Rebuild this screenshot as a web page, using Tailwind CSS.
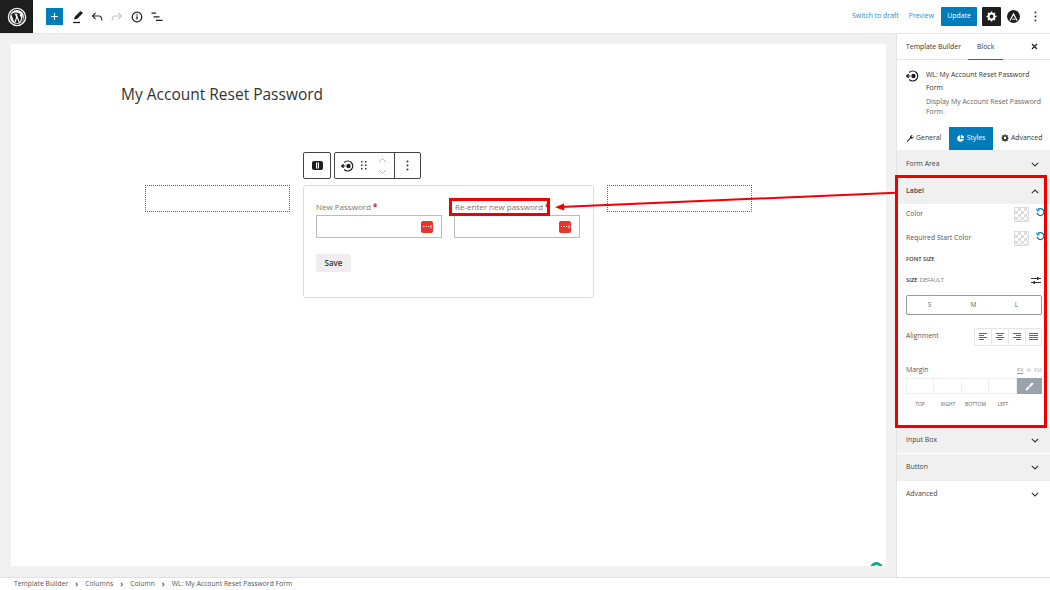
<!DOCTYPE html>
<html lang="en">
<head>
<meta charset="UTF-8">
<title>My Account Reset Password</title>
<script src="https://cdn.jsdelivr.net/npm/@tailwindcss/browser@4"></script>
</head>
<body class="relative w-[1050px] h-[590px] overflow-hidden bg-white font-['Open_Sans',sans-serif] text-[#444]">

<!-- top bar -->
<header class="flex items-center h-[34px] border-b border-[#e6e6e6] bg-white">
  <div class="flex items-center justify-center w-[33px] h-[33px] bg-[#1e1e1e]">
    <svg width="20" height="20" viewBox="0 0 20 20"><circle cx="10" cy="10" r="8.6" fill="none" stroke="#fff" stroke-width="1.3"/><circle cx="10" cy="10" r="7" fill="#fff"/><path d="M4.3 7.3l3 8.2 1.8-5.3-1-2.9h-.9V6.700h3.600v.6h-1l3 8.200 1.100-3.400c.5-1.600-.2-3-1.200-3.700a1.100 1.100 0 0 1 1-1.300A7 7 0 0 0 4.300 7.300z" fill="#1e1e1e"/><path d="M10 11l-1.700 5a7 7 0 0 0 3.500 0zM15.500 7.500c.4 1.500.2 2.800-.3 4.200l-1.700 4.300a7 7 0 0 0 2-8.500z" fill="#1e1e1e"/></svg>
  </div>
  <button class="flex items-center justify-center w-[17px] h-[17px] ml-[13px] bg-[#007cba] text-white">
    <svg width="9" height="9" viewBox="0 0 9 9"><path d="M4.500 1v7M1 4.500h7" stroke="#fff" stroke-width="1.100"/></svg>
  </button>
  <svg class="ml-[9px]" width="12" height="14" viewBox="0 0 12 14"><path d="M2 9l1-2.500L8.500 1 11 3 5.500 8.500 3 9.500z" fill="#1e1e1e"/><path d="M1 12.500h7" stroke="#1e1e1e" stroke-width="1.300"/></svg>
  <svg class="ml-[7px]" width="12" height="10" viewBox="0 0 12 10"><path d="M4.500 1L1.500 4l3 3M1.500 4H8c2 0 2.800 1.300 2.800 4.500" fill="none" stroke="#333" stroke-width="1.200"/></svg>
  <svg class="ml-[8px]" width="12" height="10" viewBox="0 0 12 10"><path d="M7.500 1l3 3-3 3M10.500 4H4C2 4 1.200 5.300 1.200 8.500" fill="none" stroke="#c8c8c8" stroke-width="1.200"/></svg>
  <svg class="ml-[8px]" width="12" height="12" viewBox="0 0 12 12"><circle cx="6" cy="6" r="4.800" fill="none" stroke="#1e1e1e" stroke-width="1.200"/><path d="M6 5.200v3.300M6 3.200v1.200" stroke="#1e1e1e" stroke-width="1.300"/></svg>
  <svg class="ml-[8px]" width="12" height="10" viewBox="0 0 12 10"><path d="M0.500 1.200h4.500M2.500 4.800h6M5 8.400h6.500" stroke="#1e1e1e" stroke-width="1.200"/></svg>

  <div class="ml-auto flex items-center">
    <span class="text-[6.900px] text-[#2a8fc5]">Switch to draft</span>
    <span class="ml-[10px] text-[6.900px] text-[#2a8fc5]">Preview</span>
    <button class="ml-[7px] w-[36px] h-[19px] bg-[#007cba] text-white text-[6.900px] rounded-[1px]">Update</button>
    <div class="ml-[5px] flex items-center justify-center w-[19px] h-[19px] bg-[#1e1e1e] rounded-[1px]">
      <svg width="11" height="11" viewBox="0 0 11 11"><circle cx="5.500" cy="5.500" r="2.900" fill="none" stroke="#fff" stroke-width="2"/><path d="M5.500 .5v2M5.500 8.500v2M.5 5.500h2M8.500 5.500h2M2 2l1.400 1.400M7.600 7.600L9 9M9 2L7.600 3.400M3.400 7.600L2 9" stroke="#fff" stroke-width="1.500"/></svg>
    </div>
    <div class="ml-[6px] flex items-center justify-center w-[13px] h-[13px] rounded-full bg-[#1e1e1e]">
      <svg width="9" height="8" viewBox="0 0 9 8"><path d="M1 7.500L4.500 1 8 7.500M3.500 6.500c1-.8 1.500-.8 2.500 0" fill="none" stroke="#fff" stroke-width="1.200"/></svg>
    </div>
    <svg class="ml-[14px] mr-[13px]" width="3" height="11" viewBox="0 0 3 11"><circle cx="1.500" cy="1.500" r="1" fill="#333"/><circle cx="1.500" cy="5.500" r="1" fill="#333"/><circle cx="1.500" cy="9.500" r="1" fill="#333"/></svg>
  </div>
</header>

<div class="flex h-[543px]">
  <!-- editor canvas -->
  <main class="relative w-[897px] h-full bg-[#f1f1f1] border-r border-[#e4e4e4] pt-[10px] px-[11px]">
    <div class="relative w-[875px] h-[522px] bg-white">
      <h1 class="pl-[110px] pt-[38px] text-[15.500px] leading-[24px] text-[#333]">My Account Reset Password</h1>

      <!-- block toolbar -->
      <div class="absolute left-[292px] top-[108px] flex gap-[3px]">
        <div class="flex items-center justify-center w-[28px] h-[27px] bg-white border border-[#444] rounded-[2px]">
          <svg width="11" height="9" viewBox="0 0 11 9"><rect x=".6" y=".6" width="9.800" height="7.800" rx="1.500" fill="#1e1e1e" stroke="#1e1e1e" stroke-width="1.200"/><rect x="4" y="1.500" width="3" height="6" fill="#fff"/><rect x="5.100" y="1.500" width=".8" height="6" fill="#1e1e1e"/></svg>
        </div>
        <div class="flex items-center h-[27px] bg-white border border-[#444] rounded-[2px]">
          <div class="flex items-center w-[59px] h-full pl-[6px]">
            <svg width="14" height="14" viewBox="0 0 14 14"><path d="M3.200 3.500A5 5 0 1 1 3.200 10.500" fill="none" stroke="#1e1e1e" stroke-width="1.200"/><circle cx="7.500" cy="7" r="2.200" fill="#1e1e1e"/><path d="M0 7h4.500M2.700 5.200L.7 7l2 1.800" fill="none" stroke="#1e1e1e" stroke-width="1.200"/></svg>
            <svg class="ml-[6px]" width="6" height="9" viewBox="0 0 6 9"><g fill="#333"><rect x="0" y="0" width="1.500" height="1.500"/><rect x="4" y="0" width="1.500" height="1.500"/><rect x="0" y="3.500" width="1.500" height="1.500"/><rect x="4" y="3.500" width="1.500" height="1.500"/><rect x="0" y="7" width="1.500" height="1.500"/><rect x="4" y="7" width="1.500" height="1.500"/></g></svg>
            <svg class="ml-[11px]" width="9" height="18" viewBox="0 0 9 18"><path d="M1 5l3.500-3.500L8 5M1 13l3.500 3.500L8 13" fill="none" stroke="#bbb" stroke-width="1"/></svg>
          </div>
          <div class="flex items-center justify-center w-[26px] h-full border-l border-[#444]">
            <svg width="3" height="11" viewBox="0 0 3 11"><circle cx="1.500" cy="1.500" r="1" fill="#333"/><circle cx="1.500" cy="5.500" r="1" fill="#333"/><circle cx="1.500" cy="9.500" r="1" fill="#333"/></svg>
          </div>
        </div>
      </div>

      <!-- columns row -->
      <div class="absolute left-[134px] top-[141px] w-[145px] h-[27px] border border-dotted border-[#666]"></div>
      <div class="absolute left-[596px] top-[141px] w-[145px] h-[27px] border border-dotted border-[#666]"></div>

      <!-- form block -->
      <div class="absolute left-[292px] top-[141px] w-[291px] h-[113px] border border-[#ddd] rounded-[3px] pl-[12px] pt-[13px] bg-white">
        <div class="flex gap-[12px]">
          <div class="w-[126px]">
            <div class="h-[16px] text-[8px] leading-[16px] text-[#777]">New Password <span class="font-bold text-[#e02020]">*</span></div>
            <div class="flex items-center justify-end w-[126px] h-[23px] pr-[8px] border border-[#bbb]">
              <svg width="12" height="12" viewBox="0 0 12 12"><rect width="12" height="12" rx="2" fill="#e5352d"/><path d="M2 5.500h1.200M4.500 5.500h1.200M7 5.500h1.200" stroke="#fff" stroke-width="1.200"/><path d="M10 4v3.500" stroke="#fff" stroke-width=".8"/></svg>
            </div>
          </div>
          <div class="w-[126px]">
            <div class="h-[16px] pl-[1px] text-[8px] leading-[16px] text-[#777]">Re-enter new password <span class="font-bold text-[#e02020]">*</span></div>
            <div class="flex items-center justify-end w-[126px] h-[23px] pr-[8px] border border-[#bbb]">
              <svg width="12" height="12" viewBox="0 0 12 12"><rect width="12" height="12" rx="2" fill="#e5352d"/><path d="M2 5.500h1.200M4.500 5.500h1.200M7 5.500h1.200" stroke="#fff" stroke-width="1.200"/><path d="M10 4v3.500" stroke="#fff" stroke-width=".8"/></svg>
            </div>
          </div>
        </div>
        <button class="block mt-[16px] w-[35px] h-[18px] bg-[#eeeeee] rounded-[2px] text-[8px] font-semibold text-[#333]">Save</button>
      </div>
    </div>
    <!-- grammarly dot, cut off by the canvas edge -->
    <div class="absolute left-[870px] top-[528px] h-[4px] w-[13px] overflow-hidden">
      <div class="w-[13px] h-[13px] rounded-full border-[3px] border-[#15a884] bg-[#dfeef5]"></div>
    </div>
  </main>

  <!-- sidebar -->
  <aside class="w-[153px] h-full bg-white">
    <div class="flex items-center h-[26px] border-b border-[#e6e6e6] text-[6.900px] text-[#333]">
      <span class="ml-[9px] pt-[2px]">Template Builder</span>
      <span class="relative ml-[7px] flex items-center h-full px-[9px] pt-[2px] font-medium">Block<span class="absolute left-0 right-0 -bottom-px h-[1px] bg-[#007cba]"></span></span>
      <svg class="ml-auto mr-[12px]" width="7" height="7" viewBox="0 0 7 7"><path d="M1 1l5 5M6 1L1 6" stroke="#1e1e1e" stroke-width="1.200"/></svg>
    </div>
    <div class="flex pl-[9px] pt-[8px] h-[67px]">
      <svg class="mt-[1px] shrink-0" width="14" height="14" viewBox="0 0 14 14"><path d="M3.200 3.500A5 5 0 1 1 3.200 10.500" fill="none" stroke="#1e1e1e" stroke-width="1.200"/><circle cx="7.500" cy="7" r="2.200" fill="#1e1e1e"/><path d="M0 7h4.500M2.700 5.200L.7 7l2 1.800" fill="none" stroke="#1e1e1e" stroke-width="1.200"/></svg>
      <div class="ml-[6px] w-[122px]">
        <div class="text-[6.900px] leading-[13px] font-medium text-[#333]">WL: My Account Reset Password Form</div>
        <div class="mt-[3px] text-[6.900px] leading-[10px] text-[#666]">Display My Account Reset Password Form.</div>
      </div>
    </div>
    <div class="flex items-center h-[23px] text-[6.900px] text-[#333]">
      <span class="flex items-center ml-[9px] w-[43px] gap-[2px]">
        <svg width="8" height="8" viewBox="0 0 8 8"><path d="M.8 7.200L4 3.800c-.3-1.500.9-3 2.800-2.800L5.500 2.300l.3 1 1 .3L8 2.300C8 4 6 5.200 4.600 4.600L1.500 8z" fill="#1e1e1e"/></svg>General</span>
      <span class="flex items-center justify-center w-[44px] h-full bg-[#007cba] text-white gap-[3px]">
        <svg width="7" height="7" viewBox="0 0 7 7"><path d="M3 .2A3.300 3.300 0 1 0 6.800 4H3z" fill="#fff"/><path d="M3.800 0v3.200H7A3.300 3.300 0 0 0 3.800 0z" fill="#fff"/></svg>Styles</span>
      <span class="flex items-center ml-[8px] gap-[2px]">
        <svg width="8" height="8" viewBox="0 0 11 11"><circle cx="5.500" cy="5.500" r="2.900" fill="none" stroke="#1e1e1e" stroke-width="2"/><path d="M5.500 .5v2M5.500 8.500v2M.5 5.500h2M8.500 5.500h2M2 2l1.400 1.400M7.600 7.600L9 9M9 2L7.600 3.400M3.400 7.600L2 9" stroke="#1e1e1e" stroke-width="1.500"/></svg>Advanced</span>
    </div>
    <div class="flex items-center justify-between h-[27px] pt-[1px] pl-[9px] pr-[11px] bg-[#f0f0f0] text-[6.900px] font-medium text-[#444]">Form Area
      <svg width="8" height="5" viewBox="0 0 8 5"><path d="M.8.8L4 4l3.200-3.200" fill="none" stroke="#333" stroke-width="1.100"/></svg>
    </div>
    <div class="flex items-center justify-between h-[26px] mt-[1px] pl-[9px] pr-[11px] bg-[#f0f0f0] text-[6.900px] font-semibold text-[#444]">Label
      <svg width="8" height="5" viewBox="0 0 8 5"><path d="M.8 4.200L4 1l3.200 3.200" fill="none" stroke="#333" stroke-width="1.100"/></svg>
    </div>

    <!-- label panel -->
    <div class="flow-root h-[222px] pl-[9px] pr-[8px] text-[6.900px] text-[#555]">
      <div class="flex items-center h-[16px] mt-[2px] -mr-[3px]">Color
        <div class="ml-auto w-[15px] h-[15px] border border-[#ddd] bg-[repeating-conic-gradient(#ddd_0_25%,#fff_0_50%)] bg-[length:6px_6px]"></div>
        <svg class="ml-[7px] -mt-[4px]" width="9" height="9" viewBox="0 0 9 9"><path d="M2 1.500A3.500 3.500 0 1 1 1 5" fill="none" stroke="#007cba" stroke-width="1.200"/><path d="M.8 .5l.3 2.500 2.500-.3" fill="none" stroke="#007cba" stroke-width="1"/></svg>
      </div>
      <div class="flex items-center h-[16px] mt-[8px] -mr-[3px]">Required Start Color
        <div class="ml-auto w-[15px] h-[15px] border border-[#ddd] bg-[repeating-conic-gradient(#ddd_0_25%,#fff_0_50%)] bg-[length:6px_6px]"></div>
        <svg class="ml-[7px] -mt-[4px]" width="9" height="9" viewBox="0 0 9 9"><path d="M2 1.500A3.500 3.500 0 1 1 1 5" fill="none" stroke="#007cba" stroke-width="1.200"/><path d="M.8 .5l.3 2.500 2.500-.3" fill="none" stroke="#007cba" stroke-width="1"/></svg>
      </div>
      <div class="mt-[7px] h-[12px] text-[5.800px] leading-[12px] font-semibold text-[#333] uppercase">Font size</div>
      <div class="flex items-center h-[12px] mt-[9px] text-[5.800px] uppercase"><span class="font-semibold text-[#333]">Size</span><span class="ml-[2px] text-[#777]">Default</span>
        <svg class="ml-auto mr-[1px]" width="10" height="9" viewBox="0 0 10 9"><path d="M0 2.500h10M0 6.500h10" stroke="#333" stroke-width="1"/><rect x="6" y="1" width="1.500" height="3" fill="#333"/><rect x="2.500" y="5" width="1.500" height="3" fill="#333"/></svg>
      </div>
      <div class="flex items-center h-[20px] mt-[9px] w-[136px] border border-[#999] rounded-[2px] text-[6.500px] text-[#666]">
        <span class="w-[45px] text-center">S</span><span class="w-[43px] text-center">M</span><span class="w-[43px] text-center">L</span>
      </div>
      <div class="flex items-center h-[19px] mt-[12px]">Alignment
        <div class="ml-auto flex w-[68px] h-[18px] border border-[#e6e6e6] rounded-[2px]">
          <div class="flex w-[17px] items-center justify-center border-r border-[#e6e6e6]"><svg width="8" height="8" viewBox="0 0 8 8"><path d="M0 .5h8M0 2.500h5M0 4.500h8M0 6.500h5" stroke="#0a86c6"/></svg></div>
          <div class="flex w-[17px] items-center justify-center border-r border-[#e6e6e6]"><svg width="8" height="8" viewBox="0 0 8 8"><path d="M0 .5h8M1.500 2.500h5M0 4.500h8M1.500 6.500h5" stroke="#0a86c6"/></svg></div>
          <div class="flex w-[17px] items-center justify-center border-r border-[#e6e6e6]"><svg width="8" height="8" viewBox="0 0 8 8"><path d="M0 .5h8M3 2.500h5M0 4.500h8M3 6.500h5" stroke="#0a86c6"/></svg></div>
          <div class="flex flex-1 items-center justify-center"><svg width="9" height="8" viewBox="0 0 9 8"><path d="M0 .5h9M0 2.500h9M0 4.500h9M0 6.500h9" stroke="#0a86c6"/></svg></div>
        </div>
      </div>
      <div class="flex items-center h-[12px] mt-[18px]">Margin
        <div class="ml-auto flex gap-[3px] text-[5.500px] text-[#bbb]"><span class="underline text-[#999]">PX</span><span>%</span><span>EM</span></div>
      </div>
      <div class="flex h-[16px] mt-[2px] w-[136px]">
        <div class="w-[28px] border border-[#eee]"></div><div class="w-[28px] border border-l-0 border-[#eee]"></div><div class="w-[27px] border border-l-0 border-[#eee]"></div><div class="w-[28px] border border-l-0 border-[#eee]"></div>
        <div class="flex items-center justify-center w-[25px] bg-[#9aa3ab]"><svg width="9" height="9" viewBox="0 0 9 9"><path d="M1.800 7.200l1.700-1.700M5.500 3.500l1.700-1.700" stroke="#fff" stroke-width="2.200" stroke-linecap="round"/><path d="M3.500 5.500l2-2" stroke="#fff" stroke-width=".8"/></svg></div>
      </div>
      <div class="flex mt-[5px] text-[5px] leading-[10px] uppercase text-[#666]">
        <span class="w-[28px] text-center">Top</span><span class="w-[28px] text-center">Right</span><span class="w-[27px] text-center">Bottom</span><span class="w-[28px] text-center">Left</span>
      </div>
    </div>

    <div class="flex items-center justify-between h-[26px] mt-[1px] pl-[9px] pr-[11px] bg-[#f0f0f0] text-[6.900px] font-medium text-[#444]">Input Box
      <svg width="8" height="5" viewBox="0 0 8 5"><path d="M.8.8L4 4l3.200-3.200" fill="none" stroke="#333" stroke-width="1.100"/></svg>
    </div>
    <div class="flex items-center justify-between h-[26px] mt-[1px] pl-[9px] pr-[11px] bg-[#f0f0f0] text-[6.900px] font-medium text-[#444]">Button
      <svg width="8" height="5" viewBox="0 0 8 5"><path d="M.8.8L4 4l3.200-3.200" fill="none" stroke="#333" stroke-width="1.100"/></svg>
    </div>
    <div class="flex items-center justify-between h-[27px] pl-[9px] pr-[11px] border-t border-[#eee] text-[6.900px] font-medium text-[#444]">Advanced
      <svg width="8" height="5" viewBox="0 0 8 5"><path d="M.8.8L4 4l3.200-3.200" fill="none" stroke="#333" stroke-width="1.100"/></svg>
    </div>
  </aside>
</div>

<!-- breadcrumb -->
<footer class="flex items-center h-[13px] pl-[14px] border-t border-[#e0e0e0] bg-white text-[6.800px] text-[#555]">
  <span>Template Builder</span><span class="mx-[7px] text-[8px] font-bold leading-none">›</span>
  <span>Columns</span><span class="mx-[7px] text-[8px] font-bold leading-none">›</span>
  <span>Column</span><span class="mx-[7px] text-[8px] font-bold leading-none">›</span>
  <span>WL: My Account Reset Password Form</span>
</footer>

<!-- red annotations -->
<div class="absolute left-[449px] top-[198px] w-[101px] h-[18px] border-[3px] border-[#f00000]"></div>
<div class="absolute left-[895px] top-[175px] w-[152px] h-[253px] border-[3px] border-[#f00000]"></div>
<svg class="absolute left-[550px] top-[185px]" width="350" height="30" viewBox="0 0 350 30">
  <path d="M346 7.700L10 22" stroke="#f00000" stroke-width="2"/>
  <path d="M5 22.200l9-3.700.3 7z" fill="#f00000"/>
</svg>
</body>
</html>
